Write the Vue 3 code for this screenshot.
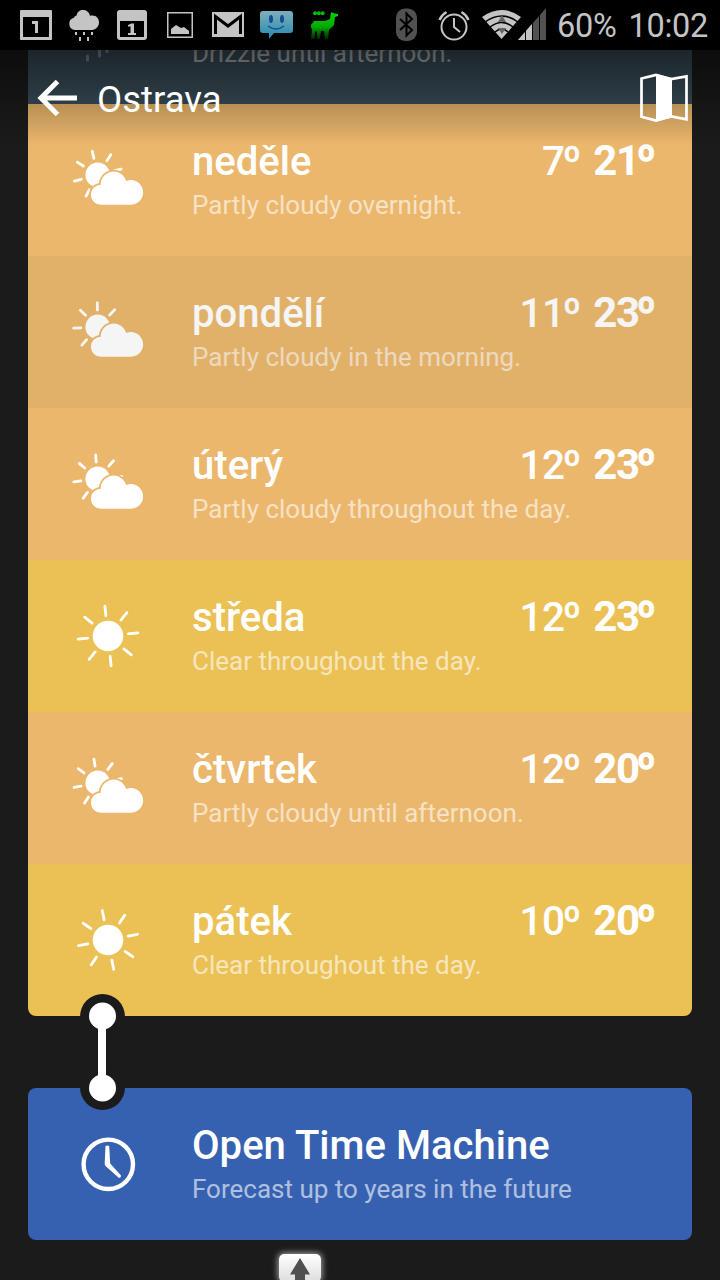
<script setup>
const partly = [-101, -54, -9, 37, 80, -147]
const clear = [-5, 40, 85, 130, 175, 220, 265, 310]
const days = [
  { name: 'neděle', text: 'Partly cloudy overnight.', lo: '7', hi: '21', sun: false, turn: -4 },
  { name: 'pondělí', text: 'Partly cloudy in the morning.', lo: '11', hi: '23', sun: false, turn: 8, pressed: true },
  { name: 'úterý', text: 'Partly cloudy throughout the day.', lo: '12', hi: '23', sun: false, turn: 4 },
  { name: 'středa', text: 'Clear throughout the day.', lo: '12', hi: '23', sun: true, turn: -1 },
  { name: 'čtvrtek', text: 'Partly cloudy until afternoon.', lo: '12', hi: '20', sun: false, turn: 0 },
  { name: 'pátek', text: 'Clear throughout the day.', lo: '10', hi: '20', sun: true, turn: -6 },
]
</script>

<template>
  <div class="screen">
    <header class="status">
      <svg width="560" height="50" viewBox="0 0 560 50">
        <g fill="#c4c4c4">
          <path fill-rule="evenodd" d="M21 10h30q1 0 1 1v28q0 1-1 1H21q-1 0-1-1V11q0-1 1-1zm2 7v20h26V17z" />
          <path d="M32 21h6v12h-3v-9h-3z" />
          <path d="M75 30a6.200 6.200 0 0 1-1-12.200c.5-1.500 1.500-2 2.500-2 1-8 12-7.500 13.500 0 6-1.500 9 2.500 9 6.500s-3 7.700-7 7.700z" />
          <path d="M75 32h2v3h-2zM83 32h2v3h-2zM91 32h2v3h-2zM79 37h2v4h-2zM87 37h2v4h-2z" />
          <path fill-rule="evenodd" d="M120 10h24q3 0 3 3v24q0 3-3 3h-24q-3 0-3-3V13q0-3 3-3zm0 11v16h24V21z" />
          <path d="M128 25l3.500-1.500h2.500v9.500h2v2h-8v-2h2.500v-6.500H128z" />
          <path fill-rule="evenodd" d="M167 12h26v26h-26zm1.500 1.500v23h23v-23z" />
          <path d="M171 29l5-4 5 3 3-1 5 4v3h-18z" />
          <path d="M212 12h32v25h-32z" />
        </g>
        <path d="M215.500 34V16.500L228 26l12.500-9.500V34" fill="none" stroke="#000" stroke-width="3" />
        <defs>
          <linearGradient id="bubble" x2="0" y2="1"><stop stop-color="#80aeba" /><stop offset="1" stop-color="#218bb2" /></linearGradient>
          <linearGradient id="llama" x2="0" y2="1"><stop stop-color="#00d600" /><stop offset=".55" stop-color="#00a900" /><stop offset="1" stop-color="#002500" /></linearGradient>
        </defs>
        <path d="M263 11h27q3 0 3 3v16q0 3-3 3h-16l-5 6v-6h-6q-3 0-3-3V14q0-3 3-3z" fill="url(#bubble)" />
        <g fill="#174c91"><ellipse cx="271" cy="19" rx="2" ry="4" /><ellipse cx="282" cy="19" rx="2" ry="4" /></g>
        <path d="M268 26q8 6 16 0" fill="none" stroke="#174c91" stroke-width="1.500" />
        <path d="M331 12l2 1 5 1v2l-3 1-1 8-5 5-1 9h-3l-1-8h-3l-1 8h-3v-8l-2 1-.5 7H311l1-9-1-3V25l3-4h11l5-2z" fill="url(#llama)" />
        <g fill="#00bd00"><circle cx="315" cy="13.200" r="2" /><circle cx="318.800" cy="13.200" r="2" /><circle cx="322.600" cy="13.200" r="2" /></g>
        <rect x="396" y="8.500" width="21" height="32.500" rx="9" fill="#505250" />
        <path d="M400 19l12 11-5.500 5.500v-22l5.500 5.500-12 11" fill="none" stroke="#000" stroke-width="2" />
        <g fill="none" stroke="#c4c4c4" stroke-width="2">
          <circle cx="454" cy="27" r="12.500" />
          <path d="M454 18v9l6 5" />
          <path d="M439.500 20q2-5 7-8M461.500 12q5 3 7 8" stroke-width="2.500" />
        </g>
        <path d="M482 17q20-14 39 0l-19.500 22z" fill="#c4c4c4" />
        <path d="M485 22q17-12 33 0M490 27q12-9 23 0M495 32q7-6 13 0" fill="none" stroke="#000" stroke-width="1.500" />
        <path d="M502 15l4 7h-8zM498 28h8l-4 6z" fill="#666" />
        <path d="M518 40l28-32v32z" fill="#505250" />
        <path d="M518 40l14-16V40z" fill="#c4c4c4" />
        <path d="M525.500 28v12M532.500 20v20M539.500 12v28" stroke="#000" />
      </svg>
      <span class="battery">60%</span><span class="time">10:02</span>
    </header>

    <main>
      <section class="forecast">
        <div class="today">
          <svg class="drops" width="40" height="16" viewBox="0 0 40 16"><path d="M3.500 6v4M15.500 1v5M23 -1v2.500" stroke="#858c90" stroke-width="3" stroke-linecap="round" /></svg>
          <p class="sub">Drizzle until afternoon.</p>
        </div>
        <article v-for="d in days" :key="d.name" class="row" :class="{ clear: d.sun, pressed: d.pressed }">
          <svg class="icon" width="80" height="80" viewBox="0 0 80 80">
            <template v-if="d.sun">
              <circle cx="40" cy="40" r="15.300" />
              <path v-for="a in clear" :key="a" d="M40 19.500V10" :transform="`rotate(${a + d.turn} 40 40)`" class="ray" />
            </template>
            <template v-else>
              <circle cx="29.700" cy="34.900" r="12.300" />
              <path v-for="a in partly" :key="a" d="M29.700 18V10.800" :transform="`rotate(${a + d.turn} 29.700 34.900)`" class="ray" />
              <path class="cloud" d="M33 64.700a10 10 0 0 1-.3-20A13 13 0 0 1 58.200 41A12.300 12.300 0 1 1 62.700 64.700z" />
            </template>
          </svg>
          <div class="info">
            <div class="line">
              <h2>{{ d.name }}</h2>
              <div class="temps"><span>{{ d.lo }}<i>º</i></span><b>{{ d.hi }}<i>º</i></b></div>
            </div>
            <p class="sub">{{ d.text }}</p>
          </div>
        </article>
      </section>

      <div class="gap">
        <svg class="link" width="46" height="118" viewBox="0 0 46 118">
          <g fill="#1b1b1b"><circle cx="22.500" cy="23.500" r="22.500" /><circle cx="22.500" cy="94.500" r="22.500" /></g>
          <g fill="#fff"><circle cx="22.500" cy="23" r="13.500" /><circle cx="22.500" cy="95" r="13.500" /><path d="M18 24h8v70h-8z" /></g>
        </svg>
      </div>

      <section class="row machine">
        <svg class="icon" width="80" height="80" viewBox="0 0 80 80">
          <circle class="dial" cx="40.300" cy="40.300" r="24.700" />
          <path d="M37.500 22q1.900-1 3.700 0l1 17.500L53 51.500q.3 2-2 2.500L37.500 42q-1-1-.8-3z" />
        </svg>
        <div class="info">
          <h2>Open Time Machine</h2>
          <p class="sub">Forecast up to years in the future</p>
        </div>
      </section>
    </main>

    <nav class="bar">
      <svg width="42" height="40" viewBox="0 0 42 40"><path d="M40 20H6M20.500 3.500L4 20l16.500 16.500" fill="none" stroke="#fff" stroke-width="5" /></svg>
      <h1>Ostrava</h1>
      <svg width="50" height="50" viewBox="0 0 50 50">
        <path d="M2.500 5.500L17 2l15 4 15.500-2.700v43L32 43.500l-15 4-14.500-3.700z" fill="none" stroke="#fff" stroke-width="2.700" />
        <path d="M17 1l16 4v39.500L17 48.500z" fill="#fff" />
      </svg>
    </nav>
    <div class="handle"><svg width="42" height="28" viewBox="0 0 42 28"><path d="M21 4l10 16.500h-5V28H16v-7.500h-5z" fill="#505050" /></svg></div>
  </div>
</template>

<style>
body { margin: 0; background: #1b1b1b; }
</style>

<style scoped>
.screen { position: relative; width: 720px; height: 1280px; overflow: hidden; background: #1b1b1b; font-family: Roboto, "Noto Sans", sans-serif; color: #fff; }
h1, h2, p { margin: 0; font-weight: 400; }
.status { height: 50px; background: #000; display: flex; align-items: center; color: #c4c4c4; font-size: 32.500px; line-height: 50px; letter-spacing: -.3px; }
.status svg { flex: none; }
.battery { width: 69px; margin-left: -3px; padding-top: 2px; }
.time { padding-top: 2px; margin-left: 2.500px; }
main { padding: 0 28px; }
.forecast { border-radius: 0 0 8px 8px; overflow: hidden; }
.today { height: 54px; background: #3b4f5b; display: flex; overflow: hidden; }
.drops { flex: none; width: 40px; margin: 0 68px 0 56px; }
.today .sub { margin-top: -12px; }
.row { height: 152px; display: flex; background: #ebb76c; box-sizing: border-box; }
.row.clear { background: #ebc155; }
.row.pressed { background: #e1b16a; color: #f5f5f5; }
.icon { flex: none; margin: 36px 44px 0 40px; fill: #fff; }
.pressed .icon { fill: #f5f5f5; }
.ray { stroke: #fff; stroke-width: 2.800; stroke-linecap: round; }
.pressed .ray { stroke: #f5f5f5; }
.cloud { stroke: #ebb76c; stroke-width: 3.600; paint-order: stroke; }
.pressed .cloud { stroke: #e1b16a; }
.dial { fill: none; stroke: #fff; stroke-width: 4.400; }
.info { flex: 1; padding: 34px 36px 0 0; }
.line { display: flex; justify-content: space-between; }
h2 { font-size: 40.100px; line-height: 48px; font-weight: 500; }
.temps { display: flex; align-items: baseline; gap: 12px; height: 48px; font-size: 40.500px; line-height: 47px; font-weight: 500; margin-top: -1px; }
.temps span { letter-spacing: -.3px; }
.temps b { font-weight: 700; font-size: 42px; letter-spacing: -1.200px; }
.temps i { font-style: normal; letter-spacing: 0; margin-left: -2.200px; -webkit-text-stroke: .5px currentColor; }
.temps b i { font-weight: 900; -webkit-text-stroke-width: 1.300px; }
.sub { font-size: 26px; line-height: 30px; margin-top: 4px; opacity: .6; white-space: nowrap; }
.gap { height: 72px; position: relative; }
.link { position: absolute; left: 52px; top: -23px; }
.machine { background: #3661b0; border-radius: 8px; }
.bar { position: absolute; left: 0; right: 0; top: 50px; height: 96px; padding: 0 31px 0 37px; box-sizing: border-box; display: flex; align-items: center; background: linear-gradient(#0008, #0003 60%, #0000); }
.bar h1 { flex: 1; font-size: 36.600px; margin-left: 18px; padding-top: 3px; }
.handle { position: absolute; left: 279px; top: 1254px; width: 42px; height: 28px; border-radius: 5px; background: linear-gradient(#fff, #ddd); box-shadow: 0 0 6px 1px #aaa; }
</style>
